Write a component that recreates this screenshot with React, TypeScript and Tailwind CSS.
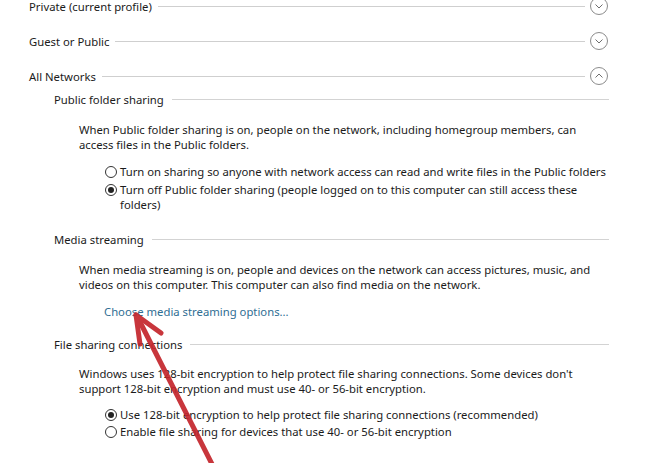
import React from "react";

function Chevron({ up }: { up?: boolean }) {
  return (
    <svg width="20" height="20" viewBox="0 0 20 20" className="shrink-0">
      <circle cx="10" cy="10" r="8.5" fill="white" stroke="#8c8c8c" strokeWidth="1" />
      {up ? (
        <path d="M6.5 11.5 L10 8 L13.5 11.5" fill="none" stroke="#6e6e6e" strokeWidth="1" />
      ) : (
        <path d="M6.5 8.5 L10 12 L13.5 8.5" fill="none" stroke="#6e6e6e" strokeWidth="1" />
      )}
    </svg>
  );
}

function GroupHeader({ title, up }: { title: string; up?: boolean }) {
  return (
    <div className="flex h-[20px] items-center">
      <span className="whitespace-nowrap">{title}</span>
      <div className="ml-[6px] mr-[4px] h-px flex-1 bg-[#cfcfcf]" />
      <Chevron up={up} />
    </div>
  );
}

function SubHeader({ title }: { title: string }) {
  return (
    <div className="flex h-[16px] items-center pl-[25px]">
      <span className="whitespace-nowrap">{title}</span>
      <div className="ml-[8px] h-px flex-1 bg-[#d3d3d3]" />
    </div>
  );
}

function Radio({ checked, children }: { checked?: boolean; children: React.ReactNode }) {
  return (
    <div className="flex items-start">
      <span className="mt-[1.5px] mr-[3px] flex h-[12px] w-[12px] shrink-0 items-center justify-center rounded-full border border-[#333] bg-white">
        {checked && <span className="h-[6px] w-[6px] rounded-full bg-[#222]" />}
      </span>
      <span>{children}</span>
    </div>
  );
}

export default function App() {
  return (
    <div
      className="relative h-[463px] w-[659px] overflow-hidden bg-white text-[11.3px] leading-[15px] text-[#1b1b1b]"
      style={{ fontFamily: '"Noto Sans", "Open Sans", sans-serif' }}
    >
      <div className="-mt-[4px] pl-[29px] pr-[50px]">
        <GroupHeader title="Private (current profile)" />
        <div className="mt-[15px]">
          <GroupHeader title="Guest or Public" />
        </div>
        <div className="mt-[15px]">
          <GroupHeader title="All Networks" up />
        </div>

        <div className="mt-[5px]">
          <SubHeader title="Public folder sharing" />
        </div>
        <div className="mt-[15px] pl-[50px]">
          <p>
            When Public folder sharing is on, people on the network, including homegroup members, can
            access files in the Public folders.
          </p>
          <div className="mt-[12px] flex flex-col gap-[3px] pl-[26px]">
            <Radio>Turn on sharing so anyone with network access can read and write files in the Public folders</Radio>
            <Radio checked>
              Turn off Public folder sharing (people logged on to this computer can still access these
              folders)
            </Radio>
          </div>
        </div>

        <div className="mt-[19px]">
          <SubHeader title="Media streaming" />
        </div>
        <div className="mt-[15px] pl-[50px]">
          <p>
            When media streaming is on, people and devices on the network can access pictures, music, and
            videos on this computer. This computer can also find media on the network.
          </p>
          <div className="mt-[12px] pl-[25px] text-[#2f6e93]">Choose media streaming options...</div>
        </div>

        <div className="mt-[17px]">
          <SubHeader title="File sharing connections" />
        </div>
        <div className="mt-[14px] pl-[50px]">
          <p>
            Windows uses 128-bit encryption to help protect file sharing connections. Some devices don't
            support 128-bit encryption and must use 40- or 56-bit encryption.
          </p>
          <div className="mt-[11px] flex flex-col gap-[2px] pl-[26px]">
            <Radio checked>Use 128-bit encryption to help protect file sharing connections (recommended)</Radio>
            <Radio>Enable file sharing for devices that use 40- or 56-bit encryption</Radio>
          </div>
        </div>
      </div>

      <svg className="pointer-events-none absolute left-0 top-0" width="659" height="463">
        <g stroke="#c4262c" strokeWidth="5" strokeLinecap="round" fill="none" opacity="0.92">
          <line x1="215" y1="470" x2="138" y2="318" />
          <line x1="136" y1="315" x2="161" y2="333" />
          <line x1="136" y1="315" x2="140" y2="344" />
        </g>
      </svg>
    </div>
  );
}
